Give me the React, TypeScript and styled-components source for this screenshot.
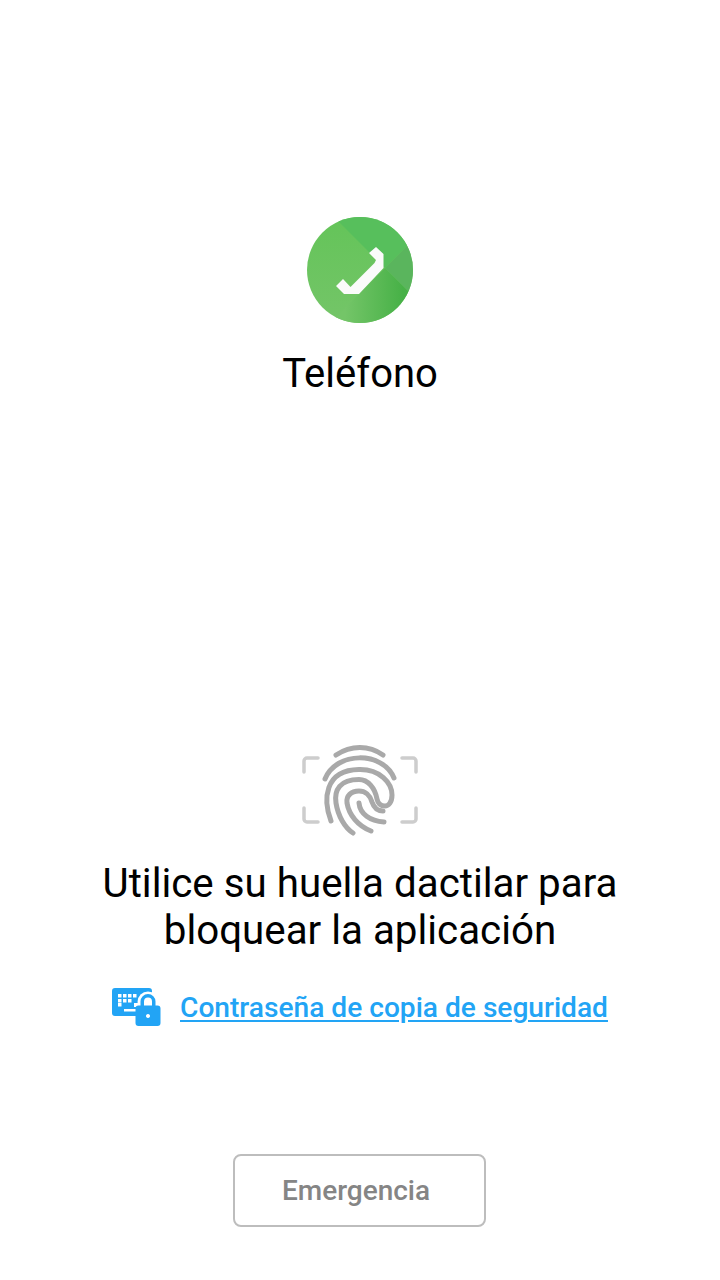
import React from "react";
import styled, { createGlobalStyle } from "styled-components";

const Global = createGlobalStyle`
  html, body { margin: 0; padding: 0; background: #fff; }
  body { font-family: Roboto, "Liberation Sans", sans-serif; }
`;
const Screen = styled.main`
  width: 720px; height: 1280px; display: flex; flex-direction: column; align-items: center;
  background: #fff; overflow: hidden;
`;
const AppBlock = styled.section`
  display: flex; flex-direction: column; align-items: center; padding-top: 217px; height: 745px; box-sizing: border-box; flex: none;
`;
const AppIcon = styled.svg`display: block; width: 106px; height: 106px;`;
const AppName = styled.h1`
  margin: 28px 0 0; font-size: 40px; line-height: 46px; font-weight: 400; color: #000;
`;
const Fingerprint = styled.svg`display: block; width: 116px; height: 92px; flex: none;`;
const Message = styled.p`
  margin: 23px 0 0; width: 600px; text-align: center; font-size: 40.3px; line-height: 47px; color: #000;
`;
const BackupRow = styled.a`
  margin-top: 31px; display: flex; align-items: center; gap: 18px; height: 44px; color: #22a4f5; text-decoration: none;
`;
const BackupIcon = styled.svg`display: block; width: 50px; height: 40px;`;
const BackupLabel = styled.span`
  font-size: 28.13px; line-height: 32px; padding-top: 2px; font-weight: 500; text-decoration: underline; text-underline-offset: 3px;
`;
const EmergencyButton = styled.button`
  margin: 125px 1px 0 0; width: 253px; height: 73px; box-sizing: border-box; border: 2px solid #bdbdbd; border-radius: 8px;
  background: #fff; color: #858585; font: 500 28px/32px Roboto, sans-serif; padding: 0 7px 0 0;
`;

const keys = [
  [118, 993], [123, 993], [128, 993], [133, 993],
  [118, 998], [123, 998], [128, 998],
  [118, 1002],
];

export default function App() {
  return (
    <Screen>
      <Global />
      <AppBlock>
        <AppIcon viewBox="0 0 106 106">
          <defs>
            <clipPath id="c"><circle cx="53" cy="53" r="53" /></clipPath>
            <linearGradient id="base" x1="0" y1="0" x2="0" y2="1">
              <stop offset="0" stopColor="#64c459" />
              <stop offset="1" stopColor="#74c568" />
            </linearGradient>
            <linearGradient id="shade" gradientUnits="userSpaceOnUse" x1="38" y1="0" x2="96" y2="0">
              <stop offset="0" stopColor="#74c568" />
              <stop offset="1" stopColor="#47b147" />
            </linearGradient>
          </defs>
          <g clipPath="url(#c)">
            <rect width="106" height="106" fill="url(#base)" />
            <polygon points="27,0 106,0 106,23 78,51" fill="#57bf5c" />
            <polygon points="78,51 106,23 106,79" fill="#5ab55d" />
            <polygon points="78,51 106,79 106,106 23,106" fill="url(#shade)" />
          </g>
          <path d="M29 69 L36 62 L43.500 70 L67.500 46 L69 43 L62 36 L69 30 L76.500 37 L76.500 51 L52 77 L37 77 Z" fill="#fbfbfb" />
        </AppIcon>
        <AppName>Teléfono</AppName>
      </AppBlock>
      <Fingerprint viewBox="302 745 116 92" fill="none" strokeLinecap="round">
        <g stroke="#cdcdcd" strokeWidth="3.5">
          <path d="M318 758H307a3 3 0 0 0-3 3v11" />
          <path d="M402 758h11a3 3 0 0 1 3 3v11" />
          <path d="M304 808v11a3 3 0 0 0 3 3h11" />
          <path d="M416 808v11a3 3 0 0 1-3 3h-11" />
        </g>
        <g stroke="#a9a9a9" strokeWidth="5">
          <path d="M336 755C351 745 369 745 383 755" />
          <path d="M325 779C336 751 383 751 394 778" />
          <path d="M331 821C323 800 324 770 359 769.500C380 769 392 783 392 795C392 803 388 806 385 806C381 806 378 804 377 799C375 788 368 779.500 359 779.500C340 779.500 334 790 336 803C338 816 345 828 353 833" />
          <path d="M371 831C358 826 349 815 347 803C346 796 351 791 359 791C365 791 370 795 372 802C374 808 378 811 383 811" />
          <path d="M359 803C360 814 370 821 384 822" />
        </g>
      </Fingerprint>
      <Message>Utilice su huella dactilar para bloquear la aplicación</Message>
      <BackupRow>
        <BackupIcon viewBox="112 986 50 40">
          <path fill="currentColor" d="M115 987H149a3 3 0 0 1 3 3v14h-16v11H115a3 3 0 0 1-3-3V990a3 3 0 0 1 3-3Z" />
          <g fill="#fff">
            {keys.map(([x, y]) => (
              <rect key={`${x}-${y}`} x={x} y={y} width="3.500" height="3.500" />
            ))}
            <rect x="124" y="1008" width="12" height="2.500" />
          </g>
          <circle cx="148" cy="1001" r="10.500" fill="#fff" />
          <rect x="134" y="1002" width="18" height="4" fill="#fff" />
          <path fillRule="evenodd" fill="currentColor" d="M138.500 1004.500H140.500v-4a7.500 7.500 0 0 1 15 0v4h2a3 3 0 0 1 3 3v14.500a3 3 0 0 1-3 3h-19a3 3 0 0 1-3-3V1007.500a3 3 0 0 1 3-3ZM144 1004.500h8v-4a4 4 0 0 0-8 0ZM148 1013a2 2 0 1 0 .01 0Z" />
        </BackupIcon>
        <BackupLabel>Contraseña de copia de seguridad</BackupLabel>
      </BackupRow>
      <EmergencyButton>Emergencia</EmergencyButton>
    </Screen>
  );
}
